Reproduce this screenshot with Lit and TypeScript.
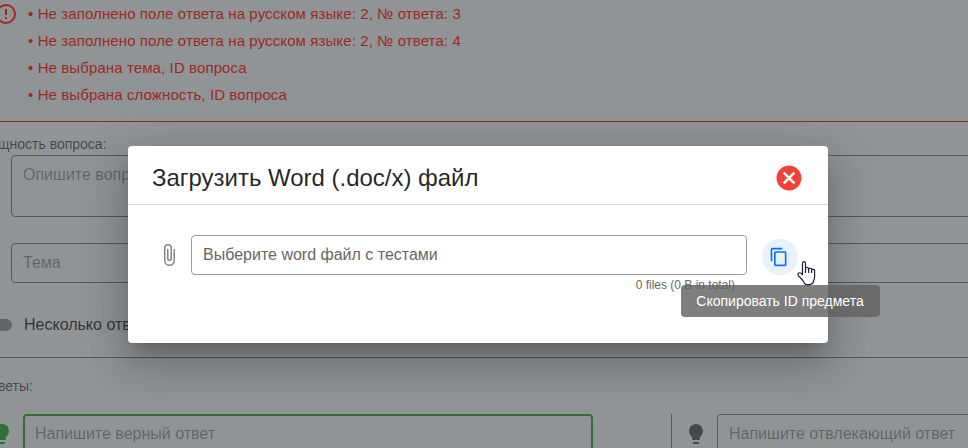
import { LitElement, html, svg, css } from "lit";
import { customElement, property } from "lit/decorators.js";

const ICONS: Record<string, string> = {
  alert: "M11,15H13V17H11V15M11,7H13V13H11V7M12,2C6.47,2 2,6.5 2,12A10,10 0 0,0 12,22A10,10 0 0,0 22,12A10,10 0 0,0 12,2M12,20A8,8 0 0,1 4,12A8,8 0 0,1 12,4A8,8 0 0,1 20,12A8,8 0 0,1 12,20Z",
  bulb: "M12,2A7,7 0 0,0 5,9C5,11.38 6.19,13.47 8,14.74V17A1,1 0 0,0 9,18H15A1,1 0 0,0 16,17V14.74C17.81,13.47 19,11.38 19,9A7,7 0 0,0 12,2M9,21A1,1 0 0,0 10,22H14A1,1 0 0,0 15,21V20H9V21Z",
  clip: "M16.5,6V17.5A4,4 0 0,1 12.5,21.5A4,4 0 0,1 8.5,17.5V5A2.5,2.5 0 0,1 11,2.5A2.5,2.5 0 0,1 13.5,5V15.5A1,1 0 0,1 12.5,16.5A1,1 0 0,1 11.5,15.5V6H10V15.5A2.5,2.5 0 0,0 12.5,18A2.5,2.5 0 0,0 15,15.5V5A4,4 0 0,0 11,1A4,4 0 0,0 7,5V17.5A5.5,5.5 0 0,0 12.5,23A5.5,5.5 0 0,0 18,17.5V6H16.5Z",
  close: "M12,2C17.53,2 22,6.47 22,12C22,17.53 17.53,22 12,22C6.47,22 2,17.53 2,12C2,6.47 6.47,2 12,2M15.59,7L12,10.59L8.41,7L7,8.41L10.59,12L7,15.59L8.41,17L12,13.41L15.59,17L17,15.59L13.41,12L17,8.41L15.59,7Z",
  copy: "M19,21H8V7H19M19,5H8A2,2 0 0,0 6,7V21A2,2 0 0,0 8,23H19A2,2 0 0,0 21,21V7A2,2 0 0,0 19,5M16,1H4A2,2 0 0,0 2,3V17H4V3H16V1Z",
};

@customElement("mdi-icon")
export class MdiIcon extends LitElement {
  @property() name = "alert";
  static styles = css`
    :host { display: block; width: 24px; height: 24px; flex: none; }
    svg { display: block; width: 100%; height: 100%; fill: currentColor; }
  `;
  render() {
    return html`<svg viewBox="0 0 24 24">${svg`<path d=${ICONS[this.name]}></path>`}</svg>`;
  }
}

@customElement("app-root")
export class AppRoot extends LitElement {
  static styles = css`
    :host {
      display: block;
      position: relative;
      width: 968px;
      height: 448px;
      overflow: hidden;
      background: #f1f6fc;
      color: rgba(0, 0, 0, 0.6);
      font: 16px/24px "Liberation Sans", Arial, sans-serif;
    }
    * { box-sizing: border-box; }
    .page { display: flex; flex-direction: column; height: 448px; overflow: hidden; white-space: nowrap; }
    .alert { display: flex; flex: none; height: 122px; gap: 10px; margin-left: -6px; padding-top: 2px; border-bottom: 1px solid #f4331c; color: #ff331c; }
    .messages { display: flex; flex-direction: column; gap: 3px; font-size: 15px; letter-spacing: 0.105px; }
    .label { flex: none; font-size: 14px; line-height: 20px; height: 20px; }
    .essence { margin: 12px 0 1px -2px; }
    .field { flex: none; border: 1px solid rgba(0, 0, 0, 0.45); border-radius: 4px; padding: 7px 11px; color: rgba(0, 0, 0, 0.38); }
    .question { height: 62px; margin-left: 11px; margin-right: -20px; }
    .topic { height: 40px; margin: 26px -20px 0 11px; }
    .switch-row { display: flex; flex: none; align-items: center; gap: 12px; height: 24px; margin-top: 30px; margin-left: -16px; color: rgba(0, 0, 0, 0.75); }
    .track { width: 28px; height: 12px; margin-top: -1px; border-radius: 6px; background: rgba(0, 0, 0, 0.36); }
    .rule { flex: none; height: 1px; margin-top: 20px; background: rgba(0, 0, 0, 0.45); }
    .answers-label { margin: 18px 0 18px -2px; }
    .answers { display: flex; flex: none; height: 60px; }
    .bulb { display: block; margin-top: 8px; }
    .right-bulb { margin-left: -10px; color: #43b047; }
    .wrong-bulb { margin-left: 12px; color: #6a6a6a; }
    .right { width: 570px; margin-left: 9px; border: 2px solid #43b047; padding: 6px 10px; }
    .separator { flex: none; width: 1px; margin-left: 78px; background: rgba(0, 0, 0, 0.45); }
    .wrong { width: 280px; margin-left: 9px; }
    .scrim { position: absolute; inset: 0; display: flex; align-items: flex-start; justify-content: center; background: rgba(33, 33, 33, 0.46); }
    .dialog { width: 700px; height: 197px; margin-top: 146px; margin-right: 12px; border-radius: 4px; background: #fff; box-shadow: 0 11px 15px -7px rgba(0, 0, 0, 0.2), 0 24px 38px 3px rgba(0, 0, 0, 0.14), 0 9px 46px 8px rgba(0, 0, 0, 0.12); white-space: nowrap; }
    .head { display: flex; align-items: center; justify-content: space-between; height: 59px; padding: 6px 24.5px 0 24px; border-bottom: 1px solid #dedede; color: rgba(0, 0, 0, 0.87); font-size: 24px; line-height: 32px; letter-spacing: -0.02px; }
    .close { width: 30px; height: 30px; color: #f44336; }
    .body { display: flex; padding: 30px 30px 0 29px; }
    .clip { color: #858585; margin: 8px 10px 0 0; }
    .upload { width: 556px; }
    .file { height: 40px; border: 1px solid #9b9b9b; border-radius: 4px; padding: 7px 11px; color: #666; }
    .count { height: 18px; margin-top: 1px; padding-right: 12px; text-align: right; font-size: 12px; line-height: 18px; color: #666; }
    .copy { display: flex; align-items: center; justify-content: center; width: 36px; height: 36px; margin: 4px 0 0 15px; border-radius: 50%; background: #e8f1ff; color: #0d6efd; }
    .copy-icon { width: 20px; height: 20px; margin: 0 2px 1px 0; }
    .tooltip { position: absolute; left: 681px; top: 285px; width: 199px; height: 32px; padding-right: 1px; border-radius: 4px; background: rgba(97, 97, 97, 0.82); color: #fff; font-size: 14px; line-height: 32px; text-align: center; white-space: nowrap; }
    .hand { position: absolute; left: 796px; top: 260px; width: 20px; height: 26px; }
  `;
  render() {
    const messages = [
      "• Не заполнено поле ответа на русском языке: 2, № ответа: 3",
      "• Не заполнено поле ответа на русском языке: 2, № ответа: 4",
      "• Не выбрана тема, ID вопроса",
      "• Не выбрана сложность, ID вопроса",
    ];
    return html`
      <div class="page">
        <div class="alert">
          <mdi-icon name="alert"></mdi-icon>
          <div class="messages">${messages.map((m) => html`<div>${m}</div>`)}</div>
        </div>
        <div class="label essence">щность вопроса:</div>
        <div class="field question">Опишите вопрос</div>
        <div class="field topic">Тема</div>
        <div class="switch-row"><div class="track"></div><div>Несколько отв</div></div>
        <div class="rule"></div>
        <div class="label answers-label">веты:</div>
        <div class="answers">
          <mdi-icon class="bulb right-bulb" name="bulb"></mdi-icon>
          <div class="field right">Напишите верный ответ</div>
          <div class="separator"></div>
          <mdi-icon class="bulb wrong-bulb" name="bulb"></mdi-icon>
          <div class="field wrong">Напишите отвлекающий ответ</div>
        </div>
      </div>
      <div class="scrim">
        <div class="dialog">
          <div class="head"><span>Загрузить Word (.doc/x) файл</span><mdi-icon class="close" name="close"></mdi-icon></div>
          <div class="body">
            <mdi-icon class="clip" name="clip"></mdi-icon>
            <div class="upload">
              <div class="file">Выберите word файл с тестами</div>
              <div class="count">0 files (0 B in total)</div>
            </div>
            <div class="copy"><mdi-icon class="copy-icon" name="copy"></mdi-icon></div>
          </div>
        </div>
      </div>
      <div class="tooltip">Скопировать ID предмета</div>
      <svg class="hand" viewBox="0 0 20 26">
        <path d="M6.5 14.5V3.2C6.5 1 9.5 1 9.5 3.2V8.4C10 7 12.5 7.2 12.6 9C13.2 7.7 15.5 8 15.6 9.7C16.4 8.8 18.6 9.2 18.6 11V17C18.6 19.5 17 20.8 17 23C14 25.3 10.5 25 8.4 23.4C8 20.8 4.8 18.5 2.6 15.8C.5 13 3.8 11.4 6.5 14.5Z" fill="#fff" stroke="#1b1b30" stroke-width="1.2" stroke-linejoin="round"></path>
        <path d="M9.5 8V13M12.6 9V13M15.6 10V13" fill="none" stroke="#1b1b30" stroke-width="1.2"></path>
      </svg>
    `;
  }
}
